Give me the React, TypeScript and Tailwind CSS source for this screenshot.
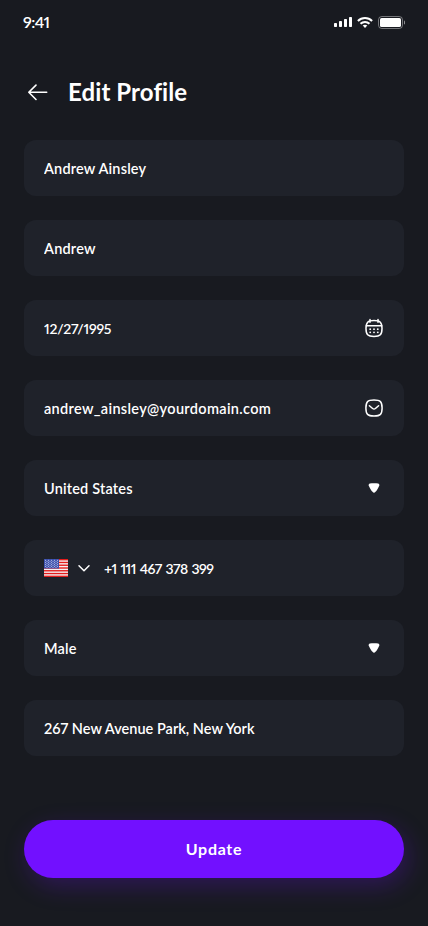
import { useState } from "react";
import type { ReactNode } from "react";
import clsx from "clsx";

function StatusBar() {
  return (
    <div className="flex h-11 items-center justify-between px-[23px]">
      <span className="text-base leading-5 font-semibold tracking-[-0.6px] proportional-nums">9:41</span>
      <div className="flex items-center gap-[5px]">
        <svg width="18" height="10" viewBox="0 0 18 10" fill="currentColor">
          <rect x="0" y="6" width="3" height="4" rx="0.7" />
          <rect x="5" y="4" width="3" height="6" rx="0.7" />
          <rect x="10" y="2" width="3" height="8" rx="0.7" />
          <rect x="15" y="0" width="3" height="10" rx="0.7" />
        </svg>
        <svg width="16" height="11" viewBox="0 0 16 11" fill="none" stroke="currentColor" strokeWidth="2">
          <path d="M0.9 4C4.9 0.1 11.1 0.1 15.1 4" />
          <path d="M3.5 6.7C6 4.3 10 4.3 12.5 6.7" />
          <path d="M8 10.9 5.7 8.6C7 7.5 9 7.5 10.3 8.6Z" fill="currentColor" stroke="none" />
        </svg>
        <svg width="27" height="13" viewBox="0 0 27 13" fill="none">
          <rect x="0.5" y="0.5" width="24" height="12" rx="3.3" stroke="currentColor" strokeOpacity="0.4" />
          <rect x="2" y="2" width="21" height="9" rx="1.6" fill="currentColor" />
          <path d="M26 4.5v4c.8-.3 1.3-1.1 1.3-2s-.5-1.7-1.3-2Z" fill="currentColor" fillOpacity="0.5" />
        </svg>
      </div>
    </div>
  );
}

function CalendarIcon() {
  return (
    <svg width="20" height="20" viewBox="0 0 20 20" fill="none" stroke="currentColor" strokeWidth="1.5" strokeLinecap="round">
      <path d="M10 2.5c6.2 0 8 1.8 8 8s-1.8 8-8 8-8-1.8-8-8 1.8-8 8-8Z" />
      <path d="M2.3 7.8h15.4M6 1.4v2.8M14 1.4v2.8" />
      <g fill="currentColor" stroke="none">
        <circle cx="6.2" cy="11.2" r="0.9" />
        <circle cx="10" cy="11.2" r="0.9" />
        <circle cx="13.8" cy="11.2" r="0.9" />
        <circle cx="6.2" cy="14.3" r="0.9" />
        <circle cx="10" cy="14.3" r="0.9" />
        <circle cx="13.8" cy="14.3" r="0.9" />
      </g>
    </svg>
  );
}

function MessageIcon() {
  return (
    <svg width="20" height="20" viewBox="0 0 20 20" fill="none" stroke="currentColor" strokeWidth="1.5" strokeLinecap="round" strokeLinejoin="round">
      <path d="M10 2c6.4 0 8.1 1.7 8.1 8s-1.7 8-8.1 8-8.1-1.7-8.1-8S3.6 2 10 2Z" />
      <path d="M5.4 7.7 8.6 10.5c.9.7 1.9.7 2.8 0l3.2-2.8" />
    </svg>
  );
}

function CaretIcon() {
  return (
    <svg width="20" height="20" viewBox="0 0 20 20" fill="currentColor">
      <path d="M10 5.2c1.6 0 3 .1 4.1.3.9.2 1.4.9 1.2 1.8-.5 2.2-3.5 7.4-5.3 7.4S5.200 9.500 4.700 7.300c-.2-.9.3-1.600 1.200-1.800 1.100-.2 2.500-.3 4.100-.3Z" />
    </svg>
  );
}

function FlagIcon() {
  return (
    <svg width="24" height="18" viewBox="0 0 24 18">
      <rect width="24" height="18" fill="#f5f1f3" />
      {[0, 1, 2, 3, 4, 5, 6].map((i) => (
        <rect key={i} y={i * 2.77} width="24" height="1.385" fill="#e31d1c" />
      ))}
      <rect width="15" height="9.5" fill="#3c50ad" />
      {[1.2, 3.2, 5.2, 7.2].map((y) =>
        [1.5, 4.5, 7.5, 10.5, 13.5].map((x) => (
          <circle key={`${x}-${y}`} cx={x} cy={y} r="0.5" fill="#d6dcf4" />
        ))
      )}
      {[2.2, 4.2, 6.2, 8.2].map((y) =>
        [3, 6, 9, 12].map((x) => (
          <circle key={`${x}-${y}`} cx={x} cy={y} r="0.5" fill="#d6dcf4" />
        ))
      )}
    </svg>
  );
}

function Field({
  label,
  value,
  className,
  before,
  after,
}: {
  label: string;
  value: string;
  className?: string;
  before?: ReactNode;
  after?: ReactNode;
}) {
  const [text, setText] = useState(value);

  return (
    <div className="flex h-14 items-center rounded-xl bg-[#1f222a] px-5">
      {before}
      <input
        aria-label={label}
        value={text}
        onChange={(e) => setText(e.target.value)}
        className={clsx("h-6 min-w-0 flex-1 bg-transparent font-semibold proportional-nums outline-none", className)}
      />
      {after}
    </div>
  );
}

export default function App() {
  return (
    <div className="flex min-h-[926px] w-full flex-col bg-[#181a20] font-['Lato','Liberation_Sans',sans-serif] text-white">
      <StatusBar />

      {/* Header */}
      <header className="mt-6 flex h-12 items-center gap-4 px-6">
        <button aria-label="Back" className="flex size-7 items-center justify-center">
          <svg width="28" height="28" viewBox="0 0 28 28" fill="none" stroke="currentColor" strokeWidth="1.6" strokeLinecap="round" strokeLinejoin="round">
            <path d="M22.7 14.3H4.8M12 21.5 4.8 14.3 12 7.1" />
          </svg>
        </button>
        <h1 className="text-2xl font-bold tracking-[0.1px]">Edit Profile</h1>
      </header>

      {/* Form */}
      <form className="mt-6 flex flex-1 flex-col px-6" onSubmit={(e) => e.preventDefault()}>
        <div className="flex flex-col gap-6">
          <Field label="Full name" value="Andrew Ainsley" className="pt-px text-[14.5px] tracking-[0.17px]" />
          <Field label="Nickname" value="Andrew" className="pt-px text-[14.5px] tracking-[0.2px]" />
          <Field label="Date of birth" value="12/27/1995" className="text-sm tracking-[-0.25px]" after={<CalendarIcon />} />
          <Field label="Email" value="andrew_ainsley@yourdomain.com" className="pt-px text-[14.5px] tracking-[0.33px]" after={<MessageIcon />} />
          <Field label="Country" value="United States" className="pt-px text-[14.5px] tracking-[0.18px]" after={<CaretIcon />} />
          <Field
            label="Phone"
            value="+1 111 467 378 399"
            className="text-sm tracking-[-0.58px] [word-spacing:1px]"
            before={
              <div className="mr-3 flex items-center gap-2">
                <FlagIcon />
                <svg width="16" height="16" viewBox="0 0 16 16" fill="none" stroke="currentColor" strokeWidth="1.5" strokeLinecap="round" strokeLinejoin="round">
                  <path d="M3 5.7 8 10.7 13 5.7" />
                </svg>
              </div>
            }
          />
          <Field label="Gender" value="Male" className="pt-px text-[14.5px] tracking-[0.2px]" after={<CaretIcon />} />
          <Field label="Address" value="267 New Avenue Park, New York" className="pt-px text-[14.5px] tracking-[0.02px]" />
        </div>

        <button
          type="submit"
          className="mt-16 h-[58px] rounded-full bg-[#7210ff] text-base font-bold tracking-[0.7px] shadow-[4px_8px_24px_rgba(114,16,255,0.25)]"
        >
          Update
        </button>
      </form>
    </div>
  );
}
